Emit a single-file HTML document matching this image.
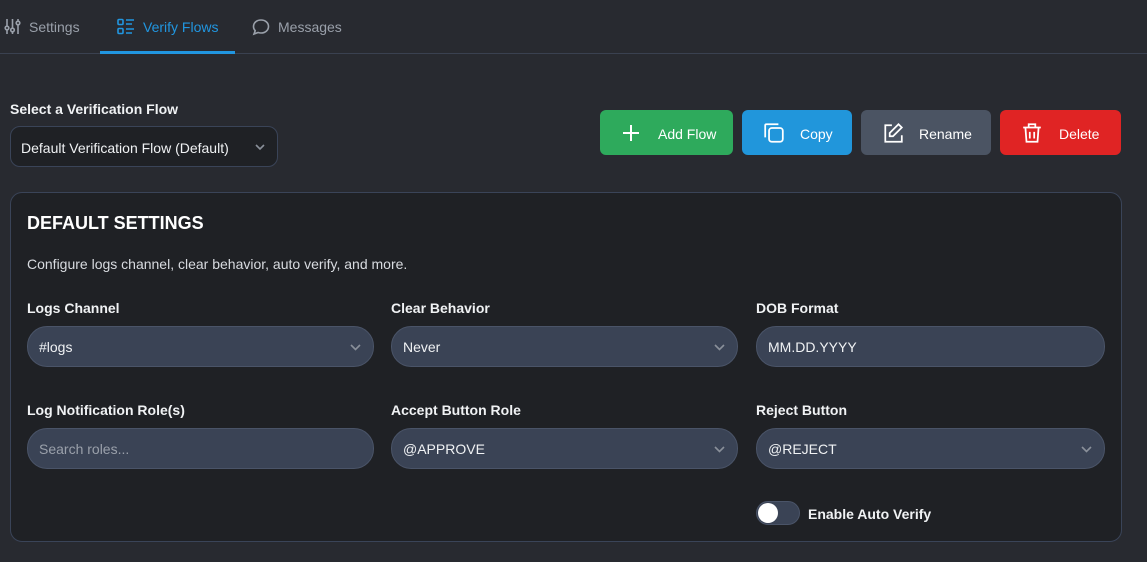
<!DOCTYPE html><html><head><style>
body{margin:0;width:1147px;height:562px;background:#282a30;font-family:"Liberation Sans",sans-serif;color:#e6e8ec;position:relative;overflow:hidden}
.a{position:absolute}
.tab{position:absolute;top:18px;font-size:14px;color:#9aa0aa;display:flex;align-items:center;gap:8px}
.btn{position:absolute;top:110px;height:45px;border-radius:6px;color:#fff;font-size:14px;display:flex;align-items:center}
.btn svg{position:absolute;left:21px}
.btn span{position:absolute;top:16px}
.lbl{position:absolute;font-size:14px;font-weight:bold;color:#f0f2f4}
.inp{position:absolute;width:347px;border-radius:20px;background:#3a4355;border:1px solid #4a5468;font-size:14px;color:#f0f2f4;display:flex;align-items:center;box-sizing:border-box;padding-left:11px;height:41px}
.chev{position:absolute;right:12px;top:17px}
</style></head><body>
<div class="tab" style="left:4px"><svg width="17" height="17" viewBox="0 0 17 17" fill="none" stroke="#9aa0aa" stroke-width="1.6"><path d="M3 1v15M8.5 1v15M14 1v15"/><circle cx="3" cy="10" r="1.8" fill="#282a30"/><circle cx="8.5" cy="12" r="1.8" fill="#282a30"/><circle cx="14" cy="5" r="1.8" fill="#282a30"/></svg>Settings</div>
<div class="tab" style="left:117px;color:#2196e0"><svg width="18" height="18" viewBox="0 0 18 18" fill="none" stroke="#2196e0" stroke-width="1.6"><rect x="1" y="1.5" width="5" height="5" rx="1"/><rect x="1" y="10.5" width="5" height="5" rx="1"/><path d="M9 2h8M9 6h6M9 11h8M9 15h6"/></svg>Verify Flows</div>
<div class="tab" style="left:252px"><svg width="18" height="18" viewBox="0 0 18 18" fill="none" stroke="#9aa0aa" stroke-width="1.6"><path d="M9 2c4.4 0 7.5 2.9 7.5 6.5S13.4 15 9 15c-1 0-2-.2-2.9-.5L2 16l1.2-3.3C2 11.5 1.5 10 1.5 8.5 1.5 4.9 4.6 2 9 2z"/></svg>Messages</div>
<div class="a" style="left:0;top:53px;width:1147px;height:1px;background:#3a4150"></div>
<div class="a" style="left:100px;top:51px;width:135px;height:3px;background:#2196e0"></div>
<div class="lbl" style="left:10px;top:101px">Select a Verification Flow</div>
<div class="a" style="left:10px;top:126px;width:268px;height:41px;box-sizing:border-box;border:1px solid #3a4458;border-radius:10px;background:#1f2125;font-size:14px;color:#f0f2f4;padding:13px 0 0 10px">Default Verification Flow (Default)<svg class="chev" style="top:17px;right:12px" width="10" height="7" viewBox="0 0 10 7"><path d="M1 1l4 4 4-4" stroke="#8a909a" stroke-width="1.6" fill="none"/></svg></div>
<div class="btn" style="left:600px;width:133px;background:#2eaa5c"><svg width="20" height="20" viewBox="0 0 20 20" stroke="#fff" stroke-width="2"><path d="M10 2v16M2 10h16"/></svg><span style="left:58px">Add Flow</span></div>
<div class="btn" style="left:742px;width:110px;background:#2196db"><svg width="22" height="22" viewBox="0 0 20 20" fill="none" stroke="#fff" stroke-width="1.6"><path d="M2 14V3a1 1 0 011-1h11"/><rect x="5.5" y="5.5" width="12.5" height="12.5" rx="2.5"/></svg><span style="left:58px">Copy</span></div>
<div class="btn" style="left:861px;width:130px;background:#4b5463"><svg width="22" height="22" viewBox="0 0 20 20" fill="none" stroke="#fff" stroke-width="1.6"><path d="M9 3H3v15h15v-6"/><path d="M15 2l3 3-8 8H7v-3z"/></svg><span style="left:58px">Rename</span></div>
<div class="btn" style="left:1000px;width:121px;background:#e02424"><svg width="22" height="22" viewBox="0 0 20 20" fill="none" stroke="#fff" stroke-width="1.6"><path d="M2 5h16M7 5V2h6v3M4 5l1 13h10l1-13M8 9v6M12 9v6"/></svg><span style="left:59px">Delete</span></div>
<div class="a" style="left:10px;top:192px;width:1112px;height:350px;box-sizing:border-box;border:1px solid #3a4458;border-radius:12px;background:#1f2125"></div>
<div class="a" style="left:27px;top:213px;font-size:18px;font-weight:bold;color:#fff">DEFAULT SETTINGS</div>
<div class="a" style="left:27px;top:256px;font-size:14px;color:#d8dbe0">Configure logs channel, clear behavior, auto verify, and more.</div>
<div class="lbl" style="left:27px;top:300px">Logs Channel</div>
<div class="lbl" style="left:391px;top:300px">Clear Behavior</div>
<div class="lbl" style="left:756px;top:300px">DOB Format</div>
<div class="inp" style="left:27px;top:326px">#logs<svg class="chev" width="11" height="7" viewBox="0 0 11 7"><path d="M1 1l4.5 4.5L10 1" stroke="#8a909a" stroke-width="1.6" fill="none"/></svg></div>
<div class="inp" style="left:391px;top:326px">Never<svg class="chev" width="11" height="7" viewBox="0 0 11 7"><path d="M1 1l4.5 4.5L10 1" stroke="#8a909a" stroke-width="1.6" fill="none"/></svg></div>
<div class="inp" style="left:756px;top:326px;width:349px">MM.DD.YYYY</div>
<div class="lbl" style="left:27px;top:402px">Log Notification Role(s)</div>
<div class="lbl" style="left:391px;top:402px">Accept Button Role</div>
<div class="lbl" style="left:756px;top:402px">Reject Button</div>
<div class="inp" style="left:27px;top:428px;color:#9aa0aa">Search roles...</div>
<div class="inp" style="left:391px;top:428px">@APPROVE<svg class="chev" width="11" height="7" viewBox="0 0 11 7"><path d="M1 1l4.5 4.5L10 1" stroke="#8a909a" stroke-width="1.6" fill="none"/></svg></div>
<div class="inp" style="left:756px;top:428px;width:349px">@REJECT<svg class="chev" width="11" height="7" viewBox="0 0 11 7"><path d="M1 1l4.5 4.5L10 1" stroke="#8a909a" stroke-width="1.6" fill="none"/></svg></div>
<div class="a" style="left:756px;top:501px;width:44px;height:24px;box-sizing:border-box;border-radius:12px;background:#3a4355;border:1px solid #4a5468"></div>
<div class="a" style="left:758px;top:503px;width:20px;height:20px;border-radius:50%;background:#fff"></div>
<div class="a" style="left:808px;top:506px;font-size:14px;font-weight:bold;color:#f0f2f4">Enable Auto Verify</div>
</body></html>
